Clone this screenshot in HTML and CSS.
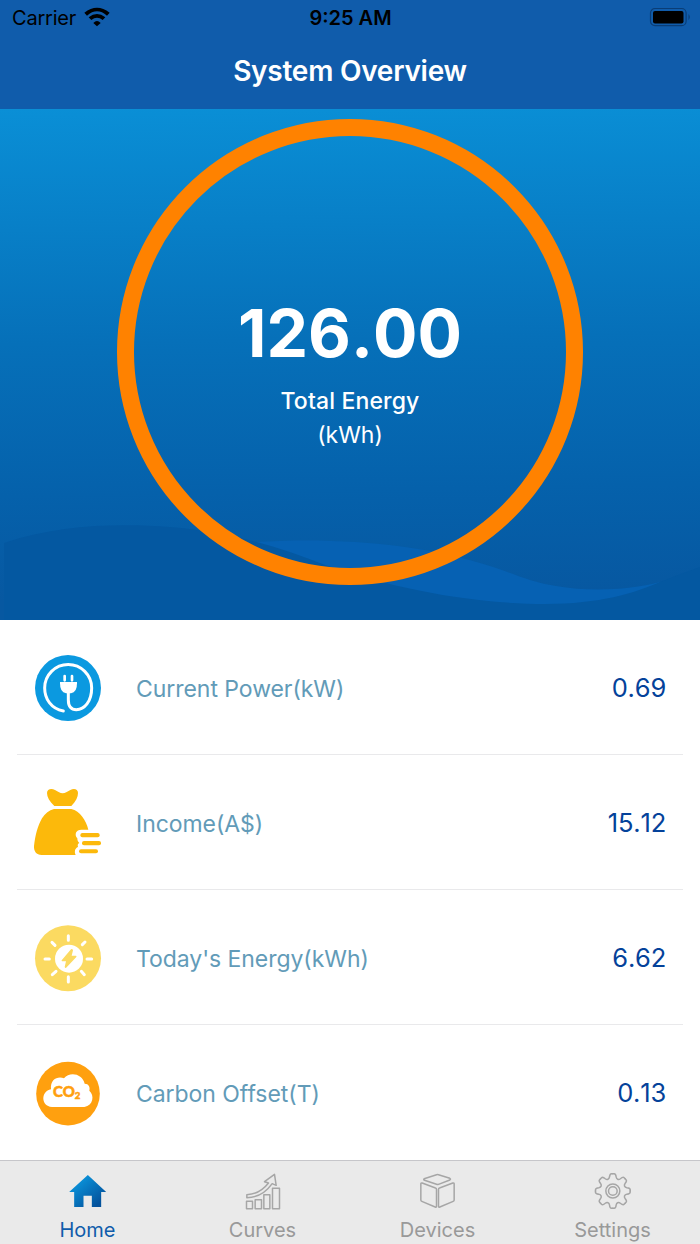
FILE: index.html
```html
<!DOCTYPE html>
<html lang="en">
<head>
    <meta charset="UTF-8">
    <meta name="viewport" content="width=device-width, initial-scale=1.0">
    <title>System Overview</title>
    <link rel="stylesheet" href="styles.css">
</head>
<body>
    <header class="header">
        <div class="status-bar">
            <div class="carrier">
                <span>Carrier</span>
                <svg class="wifi" viewBox="252 20 78 60">
                    <path d="M253 37Q291 7 329 37L321 46Q291 20 261 46Z"/>
                    <path d="M266 51Q291 31 316 51L308 59Q291 46 274 59Z"/>
                    <path d="M280 68Q291 56 302 68L291 78Z"/>
                </svg>
            </div>
            <span class="time">9:25 AM</span>
            <svg class="battery" viewBox="0 0 42 20">
                <rect x="1.500" y="1.500" width="35.600" height="17.200" rx="4.500" fill="none" stroke="#0a3d76" stroke-width="1.200"/>
                <rect x="4" y="4" width="30.500" height="12.400" rx="2"/>
                <path d="M39.500 7Q42 10 39.500 13.200Z" fill="#0a3d76"/>
            </svg>
        </div>
        <h1>System Overview</h1>
    </header>

    <section class="hero">
        <svg class="waves" viewBox="0 0 700 511">
            <path fill="#0661b3" d="M240 434C330 427 420 434 490 457C515 465 530 473 556 477C590 483 630 481 660 473L640 500H340Z"/>
            <path fill="#0458a1" d="M4 434C60 415 120 414.500 170 418C230 423 280 438 325 456C400 482 480 495 545 495C600 495 635 484 660 473Q680 465 700 458V511H4Z"/>
        </svg>
        <div class="ring">
            <div class="total">126.00</div>
            <div class="total-label">Total Energy</div>
            <div class="total-unit">(kWh)</div>
        </div>
    </section>

    <ul class="stats">
        <li class="stat">
            <svg class="stat-icon" viewBox="24 21 240 240">
                <circle cx="144" cy="144" r="99" fill="#0b99e0"/>
                <path d="M130 213C93 206 74 176 74 144A70.500 70.500 0 0 1 215 144C215 185 193 209 169 209C151 209 145 197 145 180V155" fill="none" stroke="#fff" stroke-width="9" stroke-linecap="round"/>
                <path d="M120 126H171V130Q171 158 153 160H138Q120 158 120 130Z" fill="#fff"/>
                <path d="M134 108V121M156 108V121" stroke="#fff" stroke-width="8" stroke-linecap="round"/>
            </svg>
            <span class="stat-name">Current Power(kW)</span>
            <span class="stat-value">0.69</span>
        </li>
        <li class="stat">
            <svg class="stat-icon" viewBox="24 21 240 240" fill="#fcb90b">
                <path d="M103 93C88 79 81 66 81 54C81 42 94 39 105 45C115 50 120 55 128 55C136 55 141 50 151 45C162 39 174 42 174 54C174 66 168 79 154 93Z"/>
                <path d="M102 102H154C180 108 199 137 205 164H184C168 164 162 178 172 190C172 197 174 200 178 204C172 207 173 211 174 216C164 220 163 231 167 240H65C49 240 41 228 42 213C46 180 53 153 66 130Q80 108 102 102Z"/>
                <rect x="181" y="174" width="58" height="13" rx="6"/>
                <rect x="186" y="198" width="57" height="13" rx="6"/>
                <rect x="177" y="223" width="57" height="12" rx="6"/>
            </svg>
            <span class="stat-name">Income(A$)</span>
            <span class="stat-value">15.12</span>
        </li>
        <li class="stat">
            <svg class="stat-icon" viewBox="24 21 240 240">
                <circle cx="144" cy="144.500" r="99" fill="#fbda61"/>
                <circle cx="147" cy="146" r="42" fill="#fff"/>
                <path d="M145 77V91M145 200V216M75 147H88M201 147H215M96 97L105 106M195 96L187 104M97 194L108 184M184 184L193 194" stroke="#fff" stroke-width="9" stroke-linecap="round"/>
                <path d="M153 118L125 151Q124 154 127 154H138L134 171Q136 176 140 172L169 141Q171 137 167 137H155L159 121Q157 115 153 118Z" fill="#fbda61"/>
            </svg>
            <span class="stat-name">Today's Energy(kWh)</span>
            <span class="stat-value">6.62</span>
        </li>
        <li class="stat">
            <svg class="stat-icon" viewBox="24 21 240 240">
                <circle cx="144" cy="146" r="95.500" fill="#ffa00f"/>
                <path d="M96 186C62 184 62 139 93 133C90 102 114 93 132 100C149 78 188 86 194 116C206 116 211 126 208 137C224 151 220 181 193 186Z" fill="#fff"/>
                <text class="co2" x="99" y="157">CO<tspan class="co2-sub" dy="6">2</tspan></text>
            </svg>
            <span class="stat-name">Carbon Offset(T)</span>
            <span class="stat-value">0.13</span>
        </li>
    </ul>

    <nav class="tabs">
        <a class="tab active">
            <svg viewBox="203.500 63 120 120">
                <defs>
                    <linearGradient id="homeFill" x1="0" y1="0" x2="1" y2="1">
                        <stop offset="0.150" stop-color="#0a97de"/>
                        <stop offset="0.850" stop-color="#04529c"/>
                    </linearGradient>
                </defs>
                <path fill="url(#homeFill)" d="M263 75L318 126H303V171H275V137H250V171H222V126H207Z"/>
            </svg>
            <span>Home</span>
        </a>
        <a class="tab">
            <svg class="line-icon" viewBox="728.500 63 120 120">
                <path d="M739 154H757V176H739ZM765 149H784V176H765ZM791 134H809V176H791ZM817 115H838V176H817Z"/>
                <path d="M740 134C768 133 787 122 805 99L793 95L823 73L828 106L816 101C796 129 771 143 740 143Z"/>
            </svg>
            <span>Curves</span>
        </a>
        <a class="tab">
            <svg class="line-icon" viewBox="203.500 63 120 120">
                <path d="M222 86L259 74Q262 73 265 74L299 85Q303 87 299 90L265 103Q262 104 259 103L223 91Q219 89 222 86Z"/>
                <path d="M216 99L256 114Q259 115 259 118V169Q259 173 255 171L215 154Q212 153 212 150V102Q212 98 216 99Z"/>
                <path d="M308 99L268 114Q265 115 265 118V169Q265 173 269 171L309 154Q312 153 312 150V102Q312 98 308 99Z"/>
            </svg>
            <span>Devices</span>
        </a>
        <a class="tab">
            <svg class="line-icon" viewBox="-59.500 -60 120 120">
                <defs>
                    <path id="tooth" d="M0 -52H4Q9 -52 10 -42C11 -35 17 -32.500 22.700 -36.800Q30.400 -43.200 34 -39.700L36.800 -36.800"/>
                </defs>
                <use href="#tooth"/>
                <use href="#tooth" transform="rotate(45)"/>
                <use href="#tooth" transform="rotate(90)"/>
                <use href="#tooth" transform="rotate(135)"/>
                <use href="#tooth" transform="rotate(180)"/>
                <use href="#tooth" transform="rotate(225)"/>
                <use href="#tooth" transform="rotate(270)"/>
                <use href="#tooth" transform="rotate(315)"/>
                <circle r="21"/>
                <circle r="13"/>
            </svg>
            <span>Settings</span>
        </a>
    </nav>
</body>
</html>
```

FILE: styles.css
```css
* {
    margin: 0;
    padding: 0;
    box-sizing: border-box;
}

body {
    width: 700px;
    height: 1244px;
    overflow: hidden;
    display: flex;
    flex-direction: column;
    font-family: Inter, "Liberation Sans", sans-serif;
    background: #fff;
}

.header {
    height: 109px;
    background: #105cab;
}

.status-bar {
    height: 36px;
    padding: 0 9px 0 12px;
    display: grid;
    grid-template-columns: 1fr auto 1fr;
    align-items: center;
    font-size: 20px;
    color: #000;
}

.carrier {
    display: flex;
    align-items: center;
    gap: 8px;
    letter-spacing: -0.2px;
}

.wifi {
    width: 26px;
    height: 20px;
    margin-top: -3px;
}

.time {
    position: relative;
    left: -1px;
    font-weight: 600;
}

.battery {
    width: 42px;
    height: 20px;
    justify-self: end;
    margin-top: -2px;
}

.header h1 {
    line-height: 71px;
    font-size: 28px;
    font-weight: 600;
    letter-spacing: -0.25px;
    text-align: center;
    color: #fff;
}

.hero {
    position: relative;
    height: 511px;
    display: flex;
    justify-content: center;
    background: linear-gradient(179deg, #0a8fd6 0%, #0670b9 45%, #0561ab 74%, #0758a1 94%, #0758a1 100%);
}

.waves {
    position: absolute;
    left: 0;
    top: 0;
    width: 700px;
    height: 511px;
}

.ring {
    position: relative;
    width: 466px;
    height: 466px;
    margin-top: 10px;
    padding-top: 163px;
    border: 17px solid #ff8200;
    border-radius: 50%;
    text-align: center;
    color: #fff;
}

.total {
    line-height: 68px;
    font-size: 66px;
    font-weight: 700;
    font-kerning: none;
}

.total-label {
    margin-top: 17px;
    line-height: 34px;
    font-size: 23px;
    font-weight: 500;
    letter-spacing: 0.15px;
}

.total-unit {
    line-height: 34px;
    font-size: 23px;
}

.stats {
    height: 540px;
    list-style: none;
}

.stat {
    height: 135px;
    margin: 0 17px;
    padding: 0 17px 0 11px;
    display: flex;
    align-items: center;
    border-bottom: 1px solid #e9e9eb;
}

.stat:last-child {
    border-bottom-color: transparent;
}

.stat-icon {
    width: 80px;
    height: 80px;
    margin-right: 28px;
}

.stat-name {
    flex: 1;
    padding-top: 3px;
    font-size: 23px;
    letter-spacing: -0.05px;
    color: #629bb8;
}

.stat-value {
    padding-top: 1px;
    font-size: 25.5px;
    font-kerning: none;
    letter-spacing: -0.2px;
    color: #04429a;
}

.co2 {
    font-family: Lato, sans-serif;
    font-size: 45px;
    font-weight: 900;
    fill: #ffa00f;
    stroke: #ffa00f;
    stroke-width: 1.5;
}

.co2-sub {
    font-size: 29px;
}

.tabs {
    height: 84px;
    display: grid;
    grid-template-columns: repeat(4, 1fr);
    background: #eaeaea;
    border-top: 1px solid #c6c6ca;
}

.tab {
    padding-top: 10px;
    display: flex;
    flex-direction: column;
    align-items: center;
    font-size: 20px;
    color: #999;
}

.tab svg {
    width: 40px;
    height: 40px;
}

.tab span {
    line-height: 39px;
}

.tab.active {
    color: #105cab;
}

.line-icon {
    fill: none;
    stroke: #a6a6a6;
    stroke-width: 4.5;
    stroke-linecap: round;
    stroke-linejoin: round;
}
```
